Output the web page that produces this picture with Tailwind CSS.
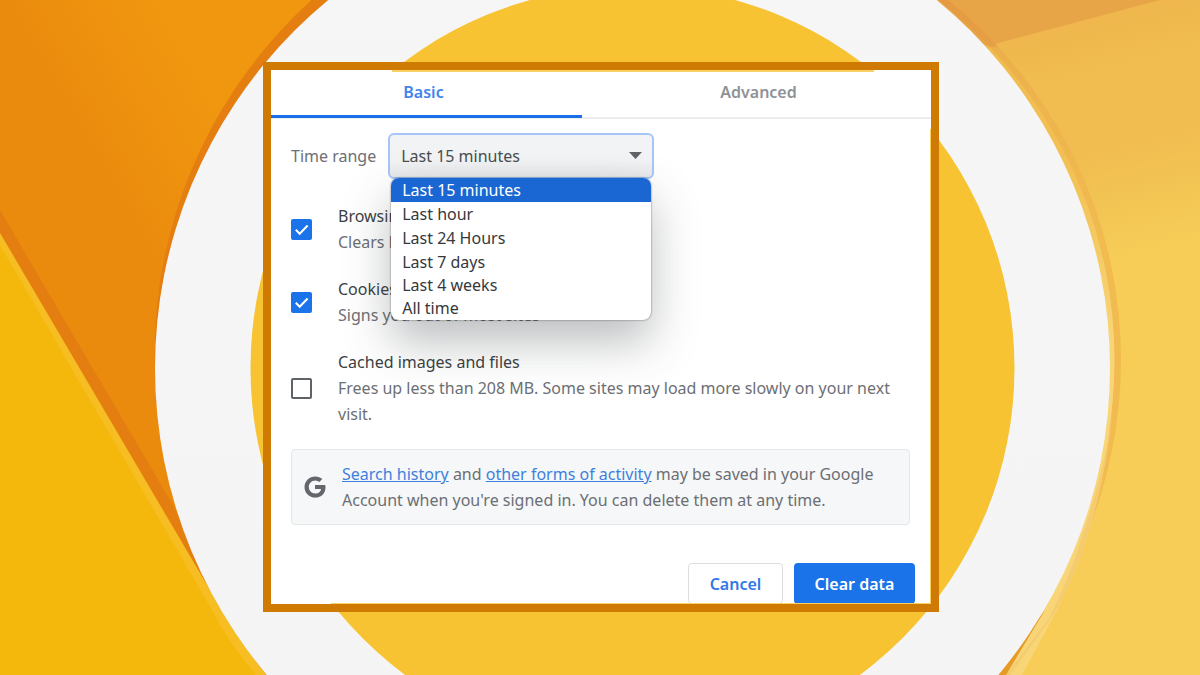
<!DOCTYPE html>
<html lang="en">
<head>
<meta charset="utf-8">
<meta name="viewport" content="width=device-width, initial-scale=1">
<title>Clear browsing data</title>
<script src="https://cdn.jsdelivr.net/npm/@tailwindcss/browser@4"></script>
</head>
<body class="bg-[#f7cc57] font-['Noto_Sans','Open_Sans',sans-serif] text-[16px] leading-[26px] text-[#6c6f74]">
<main class="relative flex min-h-screen items-center justify-center overflow-hidden pb-px pl-0.5">
  <!-- Backdrop -->
  <svg class="absolute inset-0 h-full w-full" viewBox="0 0 1200 675" preserveAspectRatio="xMidYMid slice" aria-hidden="true">
    <defs>
      <linearGradient id="left" gradientUnits="userSpaceOnUse" x1="0" y1="0" x2="120" y2="-69">
        <stop offset="0" stop-color="#eb8b0e"/><stop offset="1" stop-color="#f0970f"/>
      </linearGradient>
      <linearGradient id="right" gradientUnits="userSpaceOnUse" x1="1090" y1="20" x2="1148" y2="250">
        <stop offset="0" stop-color="#efb74d"/><stop offset=".25" stop-color="#f1bd50"/><stop offset=".55" stop-color="#f1bd50"/><stop offset=".75" stop-color="#f2c453"/><stop offset="1" stop-color="#f7cc57"/>
      </linearGradient>
      <linearGradient id="ring" x1="0" y1="0" x2="0" y2="1">
        <stop offset="0" stop-color="#f6f6f6"/><stop offset="1" stop-color="#f4f4f4"/>
      </linearGradient>
      <linearGradient id="band" gradientUnits="userSpaceOnUse" x1="0" y1="0" x2="0" y2="240">
        <stop offset="0" stop-color="#e59a42"/><stop offset=".19" stop-color="#e59f45"/><stop offset=".2" stop-color="#ecb04b"/><stop offset="1" stop-color="#f1bb50"/>
      </linearGradient>
      <linearGradient id="rim" gradientUnits="userSpaceOnUse" x1="0" y1="0" x2="0" y2="340">
        <stop offset="0" stop-color="#e8a547"/><stop offset=".13" stop-color="#e8a547"/><stop offset=".14" stop-color="#f0bb4f"/><stop offset=".5" stop-color="#f2c153"/><stop offset="1" stop-color="#f8d577"/>
      </linearGradient>
    </defs>
    <rect width="620" height="675" fill="url(#left)"/>
    <circle cx="632" cy="354" r="477.500" fill="#e57e10"/>
    <path d="M0 210L173 505L215 600L0 240Z" fill="#e57e10"/>
    <path d="M0 233L210 590Q232 632 266 675H0Z" fill="#f6be22"/>
    <path d="M0 245L212 610Q228 642 256 675H0Z" fill="#f4b80c"/>
    <rect x="620" width="580" height="675" fill="url(#right)"/>
    <path d="M620 0H1160L991 45L960 60H620Z" fill="#e8a547"/>
    <circle cx="660" cy="360" r="461" fill="url(#band)"/>
    <circle cx="659.500" cy="360" r="455" fill="url(#rim)"/>
    <path d="M1114 362Q1113 455 1086 540Q1076 572 1057 610L1022 675H900V362Z" fill="#f8d577"/>
    <path d="M1114 400Q1106 480 1086 540Q1078 570 1054 614L1010 675H1006L1048 620Q1068 582 1081 540Q1108 460 1114 400Z" fill="#f5cb6f"/>
    <path d="M998 675L1037 620L1045 610L1006 675Z" fill="#e69a28"/>
    <circle cx="632.500" cy="368" r="477.500" fill="url(#ring)"/>
    <circle cx="632.500" cy="368" r="382" fill="#f7c332"/>
  </svg>

  <section class="relative w-full max-w-[676px] overflow-hidden border-8 border-[#cf7a02] bg-white" aria-label="Clear browsing data">
    <div class="absolute top-0 right-[57px] left-[121px] h-[2px] bg-[#f9d166]"></div>
    <div class="absolute top-[59px] right-0 bottom-0 w-px bg-[#f9d166]"></div>
    <div class="absolute right-0 bottom-0 left-[60px] z-10 h-px bg-[#f9d166]"></div>

    <div class="flex h-[49px] border-b-2 border-[#ededee] font-semibold" role="tablist">
      <button type="button" role="tab" aria-selected="true" class="-mb-px w-[311px] border-b-3 border-[#1a6fe8] pr-1.5 pb-0.5 text-[#4285ee]">Basic</button>
      <button type="button" role="tab" aria-selected="false" class="-mb-px flex-1 border-b-3 border-transparent pb-0.5 pl-1 text-[#8f9296]">Advanced</button>
    </div>

    <div class="px-5 pt-[14px]">
      <div class="flex items-center gap-3">
        <label for="range">Time range</label>
        <div class="relative">
          <select id="range" class="block h-[46px] w-[266px] appearance-none rounded-md border-2 border-[#a5c6f7] bg-linear-to-b from-[#f1f3f4] from-60% to-[#e6e8e9] px-[11px] text-[#4a4d51] outline-none">
            <option>Last 15 minutes</option><option>Last hour</option><option>Last 24 Hours</option><option>Last 7 days</option><option>Last 4 weeks</option><option>All time</option>
          </select>
          <svg class="pointer-events-none absolute top-[19px] right-3 h-[7px] w-[13px]" viewBox="0 0 13 7" aria-hidden="true"><path d="M0 0H13L6.500 7Z" fill="#5f6368"/></svg>
          <ul role="listbox" aria-label="Time range" class="absolute top-[45px] left-[3px] z-10 w-[260px] overflow-hidden rounded-lg bg-white leading-[24px] text-[#36383c] shadow-[0_0_2px_rgba(0,0,0,0.6),0_22px_46px_rgba(60,64,67,0.34)] *:px-[11px]">
            <li role="option" aria-selected="true" class="bg-[#1a67d4] text-white">Last 15 minutes</li>
            <li role="option">Last hour</li>
            <li role="option">Last 24 Hours</li>
            <li role="option">Last 7 days</li>
            <li role="option" class="leading-[22px]">Last 4 weeks</li>
            <li role="option" class="leading-[24px]">All time</li>
          </ul>
        </div>
      </div>

      <div class="mt-6 flex flex-col gap-[21px]">
        <label class="flex items-center gap-[26px]">
          <span class="grid shrink-0 *:col-start-1 *:row-start-1">
            <input type="checkbox" checked class="size-[21px] appearance-none rounded-[2px] border-2 border-[#5f6368] checked:border-[#1a73e8] checked:bg-[#1a73e8]">
            <svg class="pointer-events-none size-[21px]" viewBox="0 0 21 21" fill="none" stroke="#fff" stroke-width="2" aria-hidden="true"><path d="M4.800 10.800L8.700 14.700L16.600 6.500"/></svg>
          </span>
          <span><span class="block text-[#3c3f43]">Browsing history</span><span class="block">Clears history</span></span>
        </label>
        <label class="flex items-center gap-[26px]">
          <span class="grid shrink-0 *:col-start-1 *:row-start-1">
            <input type="checkbox" checked class="size-[21px] appearance-none rounded-[2px] border-2 border-[#5f6368] checked:border-[#1a73e8] checked:bg-[#1a73e8]">
            <svg class="pointer-events-none size-[21px]" viewBox="0 0 21 21" fill="none" stroke="#fff" stroke-width="2" aria-hidden="true"><path d="M4.800 10.800L8.700 14.700L16.600 6.500"/></svg>
          </span>
          <span><span class="block text-[#3c3f43]">Cookies and other site data</span><span class="block">Signs you out of most sites</span></span>
        </label>
        <label class="flex items-center gap-[26px]">
          <input type="checkbox" class="size-[21px] shrink-0 appearance-none rounded-[2px] border-2 border-[#5f6368] bg-white checked:bg-[#1a73e8]">
          <span><span class="block text-[#3c3f43]">Cached images and files</span><span class="block">Frees up less than 208 MB. Some sites may load more slowly on your next visit.</span></span>
        </label>
      </div>

      <div class="mt-[22px] mr-px flex items-center gap-[16px] rounded border border-[#e3e7e8] bg-[#f5f7f8] py-[11px] pl-3">
        <svg class="size-[22px] shrink-0" viewBox="0 0 22 22" aria-hidden="true"><path fill="#63666b" d="M11 9.100H21.200C21.400 10 21.500 10.600 21.500 11.500C21.500 17.300 17.400 21.600 11.200 21.600C5.300 21.600.5 16.900.5 11S5.300.4 11.200.4C14.100.4 16.500 1.500 18.300 3.100L15.300 6.100C14.400 5.300 13 4.500 11.200 4.500C7.700 4.500 4.800 7.400 4.800 11S7.700 17.500 11.200 17.500C14.900 17.500 16.700 15.100 17.100 12.900H11Z"/></svg>
        <p><a href="#" class="text-[#3f80dc] underline">Search history</a> and <a href="#" class="text-[#3f80dc] underline">other forms of activity</a> may be saved in your Google Account when you're signed in. You can delete them at any time.</p>
      </div>
    </div>

    <div class="mt-[38px] flex justify-end gap-[11px] pr-4 font-semibold">
      <button type="button" class="h-[41px] w-[95px] rounded border border-[#dcdee1] bg-white text-[#3079e8]">Cancel</button>
      <button type="button" class="h-[41px] w-[121px] rounded bg-[#1a73e8] text-white">Clear data</button>
    </div>
  </section>
</main>
</body>
</html>
